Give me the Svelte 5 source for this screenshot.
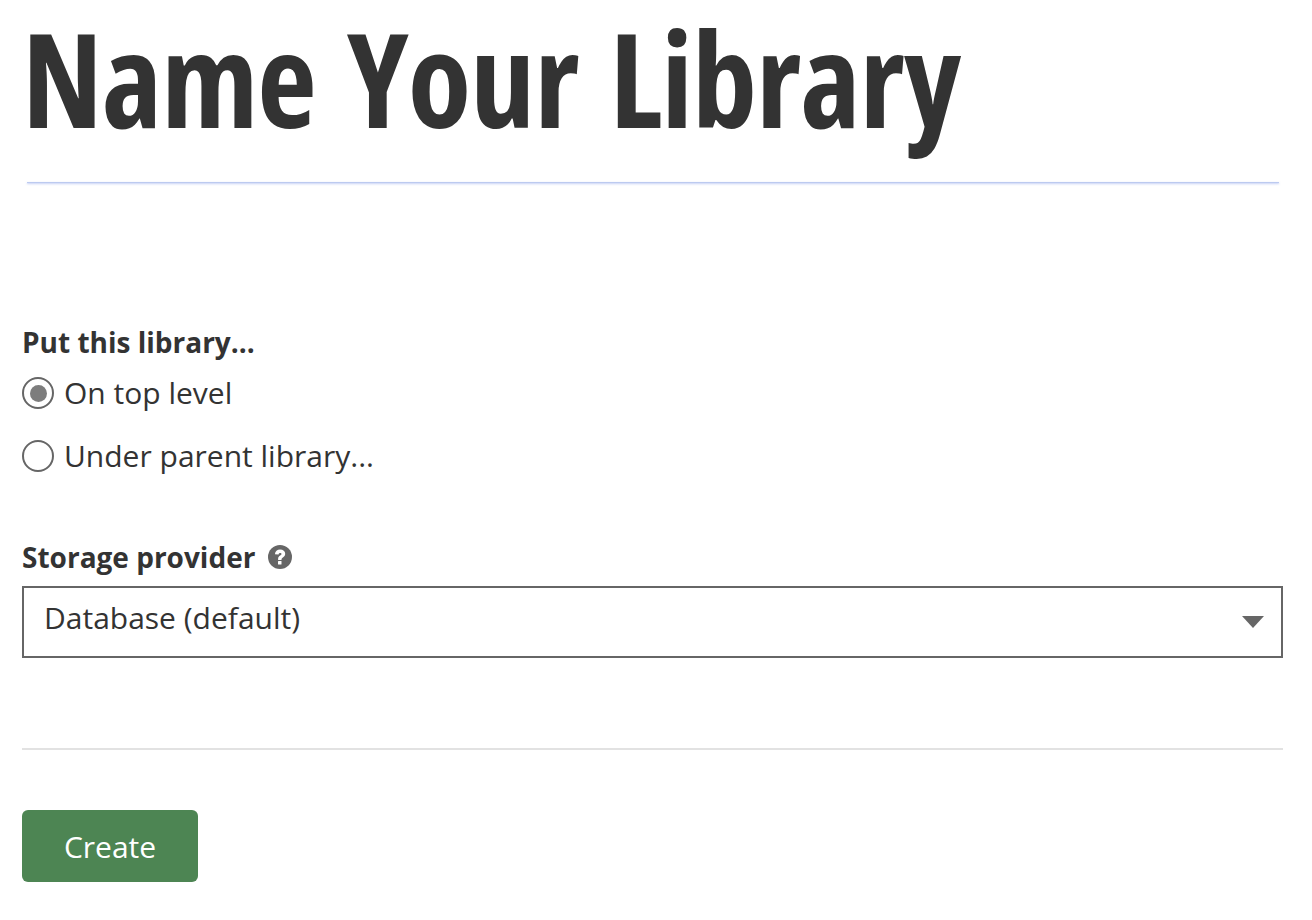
<script lang="ts">
  let parent = $state('top');
  let provider = $state('Database (default)');
</script>

<main class="page">
  <header class="title-block">
    <h1>Name Your Library</h1>
    <div class="title-rule"></div>
  </header>

  <form class="form" onsubmit={(e) => e.preventDefault()}>
    <fieldset class="field-parent">
      <legend>Put this library...</legend>
      <label class="radio first">
        <input type="radio" name="parent" value="top" bind:group={parent} />
        <span>On top level</span>
      </label>
      <label class="radio">
        <input type="radio" name="parent" value="under" bind:group={parent} />
        <span>Under parent library...</span>
      </label>
    </fieldset>

    <div class="field-storage">
      <div class="field-label">
        <span>Storage provider</span>
        <svg class="help" viewBox="0 0 24 24" width="24" height="24" aria-hidden="true">
          <circle cx="12" cy="12" r="12" fill="#666" />
          <path d="M6.9 9.2c.2-2.8 2.3-4.6 5.2-4.6 3 0 5.1 1.7 5.1 4.2 0 1.8-1 2.7-2.3 3.6-1 .7-1.4 1.1-1.4 2v.5h-3.4v-.8c0-1.7.7-2.6 1.9-3.5.9-.7 1.5-1 1.5-1.6 0-.6-.6-1-1.3-1-.9 0-1.5.5-1.6 1.5z" fill="#fff" />
          <rect x="10" y="16" width="3.5" height="3.4" rx=".5" fill="#fff" />
        </svg>
      </div>
      <div class="select-wrap">
        <select bind:value={provider}>
          <option>Database (default)</option>
        </select>
        <svg class="caret" viewBox="0 0 22 12" width="22" height="12" aria-hidden="true">
          <path d="M0 0h22L11 12z" fill="#666" />
        </svg>
      </div>
    </div>

    <hr />

    <button type="submit" class="create">Create</button>
  </form>
</main>

<style>
  :global(body) {
    background: #fff;
    color: #333;
    font-family: "Open Sans", "Noto Sans", sans-serif;
  }

  .page {
    padding: 0 29px 38px 22px;
  }

  h1 {
    margin: 0;
    padding-bottom: 26px;
    font-size: 130px;
    line-height: 156px;
    font-weight: 700;
    font-stretch: 75%;
    letter-spacing: -1px;
    word-spacing: 9px;
    color: #333;
    white-space: nowrap;
  }

  .title-rule {
    height: 1px;
    margin: 0 4px 0 5px;
    background: #bccaf0;
    box-shadow: 0 1px 2px rgba(100, 130, 230, 0.5);
  }

  .form {
    margin-top: 141px;
    font-size: 30px;
  }

  fieldset {
    border: 0;
    margin: 0;
    padding: 0;
  }

  legend {
    padding: 0;
    font-weight: 700;
    font-size: 28px;
    line-height: 36px;
  }

  .radio {
    display: flex;
    align-items: center;
    gap: 10px;
    height: 32px;
    margin-top: 31px;
    line-height: 32px;
  }

  .radio.first {
    margin-top: 17px;
  }

  input[type='radio'] {
    appearance: none;
    flex: none;
    width: 32px;
    height: 32px;
    margin: 0;
    border: 2px solid #666;
    border-radius: 50%;
    background: #fff;
    display: grid;
    place-items: center;
  }

  input[type='radio']:checked::before {
    content: '';
    width: 17px;
    height: 17px;
    border-radius: 50%;
    background: #7d7d7d;
  }

  .field-storage {
    margin-top: 67px;
  }

  .field-label {
    display: flex;
    align-items: center;
    gap: 13px;
    height: 36px;
    font-size: 28px;
    font-weight: 700;
  }

  .select-wrap {
    position: relative;
    margin-top: 11px;
  }

  select {
    display: block;
    width: 100%;
    height: 72px;
    appearance: none;
    border: 2px solid #666;
    border-radius: 0;
    background: #fff;
    color: #333;
    font: inherit;
    padding: 0 60px 9px 20px;
  }

  .caret {
    position: absolute;
    right: 19px;
    top: 30px;
  }

  hr {
    border: 0;
    height: 2px;
    background: #e2e2e2;
    margin: 90px 0 0;
  }

  .create {
    display: block;
    margin-top: 60px;
    width: 176px;
    height: 72px;
    border: 0;
    border-radius: 6px;
    background: #4d8553;
    color: #fff;
    font: inherit;
  }
</style>
